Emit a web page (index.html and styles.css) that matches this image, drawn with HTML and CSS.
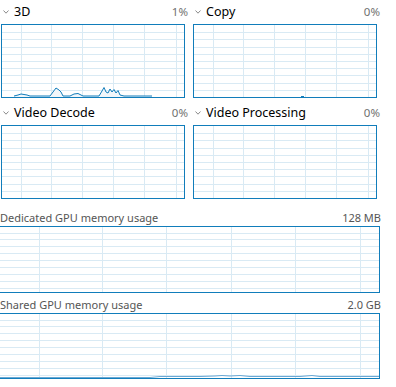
FILE: index.html
```html
<!DOCTYPE html>
<html lang="en">
  <head>
    <meta charset="UTF-8" />
    <meta name="viewport" content="width=device-width, initial-scale=1.0" />
    <title>GPU Performance</title>
    <link rel="stylesheet" href="styles.css">
  </head>
  <body>
    <div class="perf">
      <div class="engines">
        <section class="engine">
          <div class="engine-head">
            <svg class="chev" width="6" height="4" viewBox="0 0 6 4"><polyline points="0.5,0.5 3,3.2 5.5,0.5" /></svg>
            <span class="engine-name">3D</span>
            <span class="engine-val">1%</span>
          </div>
          <div class="chart">
            <svg width="182" height="72" viewBox="0 0 182 72">
              <path class="grid" d="M19.5 0V72M49.5 0V72M80.5 0V72M111.5 0V72M142.5 0V72M174.5 0V72M0 7.5H182M0 14.5H182M0 22.5H182M0 29.5H182M0 36.5H182M0 43.5H182M0 50.5H182M0 58.5H182M0 65.5H182" />
              <polygon class="area" points="12,72 12,71 16,70 19,69 22,69.5 25,70 28,71 48,71 51,67 54,63 57,65 59,67 61,71 68,71 72,69 76,68.5 79,70 81,71 97,71 100,66 102,62.5 104,67 106,68 108,64 110,67 112,64.5 114,68 116,65.5 118,70 122,71 150,71 150,72" />
              <polyline class="line" points="12,71 16,70 19,69 22,69.5 25,70 28,71 48,71 51,67 54,63 57,65 59,67 61,71 68,71 72,69 76,68.5 79,70 81,71 97,71 100,66 102,62.5 104,67 106,68 108,64 110,67 112,64.5 114,68 116,65.5 118,70 122,71 150,71" />
            </svg>
          </div>
        </section>

        <section class="engine">
          <div class="engine-head">
            <svg class="chev" width="6" height="4" viewBox="0 0 6 4"><polyline points="0.5,0.5 3,3.2 5.5,0.5" /></svg>
            <span class="engine-name">Copy</span>
            <span class="engine-val">0%</span>
          </div>
          <div class="chart">
            <svg width="182" height="72" viewBox="0 0 182 72">
              <path class="grid" d="M19.5 0V72M49.5 0V72M80.5 0V72M111.5 0V72M142.5 0V72M174.5 0V72M0 7.5H182M0 14.5H182M0 22.5H182M0 29.5H182M0 36.5H182M0 43.5H182M0 50.5H182M0 58.5H182M0 65.5H182" />
              <polyline class="line" points="107,71.5 110,71.5" />
            </svg>
          </div>
        </section>

        <section class="engine">
          <div class="engine-head">
            <svg class="chev" width="6" height="4" viewBox="0 0 6 4"><polyline points="0.5,0.5 3,3.2 5.5,0.5" /></svg>
            <span class="engine-name">Video Decode</span>
            <span class="engine-val">0%</span>
          </div>
          <div class="chart">
            <svg width="182" height="72" viewBox="0 0 182 72">
              <path class="grid" d="M19.5 0V72M49.5 0V72M80.5 0V72M111.5 0V72M142.5 0V72M174.5 0V72M0 7.5H182M0 14.5H182M0 22.5H182M0 29.5H182M0 36.5H182M0 43.5H182M0 50.5H182M0 58.5H182M0 65.5H182" />
            </svg>
          </div>
        </section>

        <section class="engine">
          <div class="engine-head">
            <svg class="chev" width="6" height="4" viewBox="0 0 6 4"><polyline points="0.5,0.5 3,3.2 5.5,0.5" /></svg>
            <span class="engine-name">Video Processing</span>
            <span class="engine-val">0%</span>
          </div>
          <div class="chart">
            <svg width="182" height="72" viewBox="0 0 182 72">
              <path class="grid" d="M19.5 0V72M49.5 0V72M80.5 0V72M111.5 0V72M142.5 0V72M174.5 0V72M0 7.5H182M0 14.5H182M0 22.5H182M0 29.5H182M0 36.5H182M0 43.5H182M0 50.5H182M0 58.5H182M0 65.5H182" />
            </svg>
          </div>
        </section>
      </div>

      <section class="memory first">
        <div class="mem-head">
          <span class="mem-name">Dedicated GPU memory usage</span>
          <span class="mem-val">128 MB</span>
        </div>
        <div class="chart wide">
          <svg width="379" height="65" viewBox="0 0 379 65">
            <path class="grid" d="M39.5 0V65M102.5 0V65M166.5 0V65M231.5 0V65M295.5 0V65M360.5 0V65M0 6.5H379M0 12.5H379M0 19.5H379M0 26.5H379M0 33.5H379M0 40.5H379M0 47.5H379M0 54.5H379M0 61.5H379" />
          </svg>
        </div>
      </section>

      <section class="memory">
        <div class="mem-head">
          <span class="mem-name">Shared GPU memory usage</span>
          <span class="mem-val">2.0 GB</span>
        </div>
        <div class="chart wide">
          <svg width="379" height="64" viewBox="0 0 379 64">
            <path class="grid" d="M39.5 0V64M102.5 0V64M166.5 0V64M231.5 0V64M295.5 0V64M360.5 0V64M0 6.5H379M0 12.5H379M0 19.5H379M0 26.5H379M0 33.5H379M0 40.5H379M0 47.5H379M0 54.5H379M0 61.5H379" />
            <polyline class="line soft" points="0,63.5 150,63.5 160,62.5 200,62.5 215,62 222,61.5 230,62 240,61.5 250,62.5 300,62.5 312,61.5 320,62.5 379,62.5" />
          </svg>
        </div>
      </section>
    </div>
  </body>
</html>
```

FILE: styles.css
```css
* {
  margin: 0;
  padding: 0;
  box-sizing: border-box;
}
body {
  font-family: "Noto Sans", "Open Sans", sans-serif;
  background: #ffffff;
  color: #000000;
  overflow: hidden;
}
.perf {
  width: 396px;
  height: 387px;
}
.engines {
  display: grid;
  grid-template-columns: 187px 187px;
  column-gap: 5px;
  row-gap: 3px;
  padding-left: 1px;
}
.engine-head {
  height: 24px;
  display: flex;
  align-items: baseline;
  line-height: 23px;
}
.chev {
  align-self: center;
  margin: 0 5px 0 2px;
  fill: none;
  stroke: #8a8a8a;
  stroke-width: 1;
}
.engine-name {
  flex: 1;
  font-size: 12.5px;
}
.engine-val {
  font-size: 11.5px;
  color: #707070;
}
.chart {
  width: 184px;
  height: 74px;
  border: 1px solid #117dbb;
  background: #ffffff;
}
.chart svg {
  display: block;
}
.chart.wide {
  width: 381px;
  height: 67px;
}
.memory {
  margin-left: -1px;
  width: 382px;
}
.memory.first {
  margin-top: 7px;
}
.memory + .memory .chart.wide {
  height: 66px;
}
.mem-head {
  height: 20px;
  display: flex;
  justify-content: space-between;
  align-items: baseline;
  line-height: 24px;
  font-size: 11px;
  color: #555555;
  padding-left: 1px;
}
.mem-val {
  color: #555555;
}
.grid {
  stroke: #d9eaf4;
  stroke-width: 1;
  fill: none;
}
.line {
  fill: none;
  stroke: #117dbb;
  stroke-width: 1;
}
.line.soft {
  stroke: #6aa8d4;
}
.area {
  fill: #f1f6fa;
  stroke: none;
}
```
